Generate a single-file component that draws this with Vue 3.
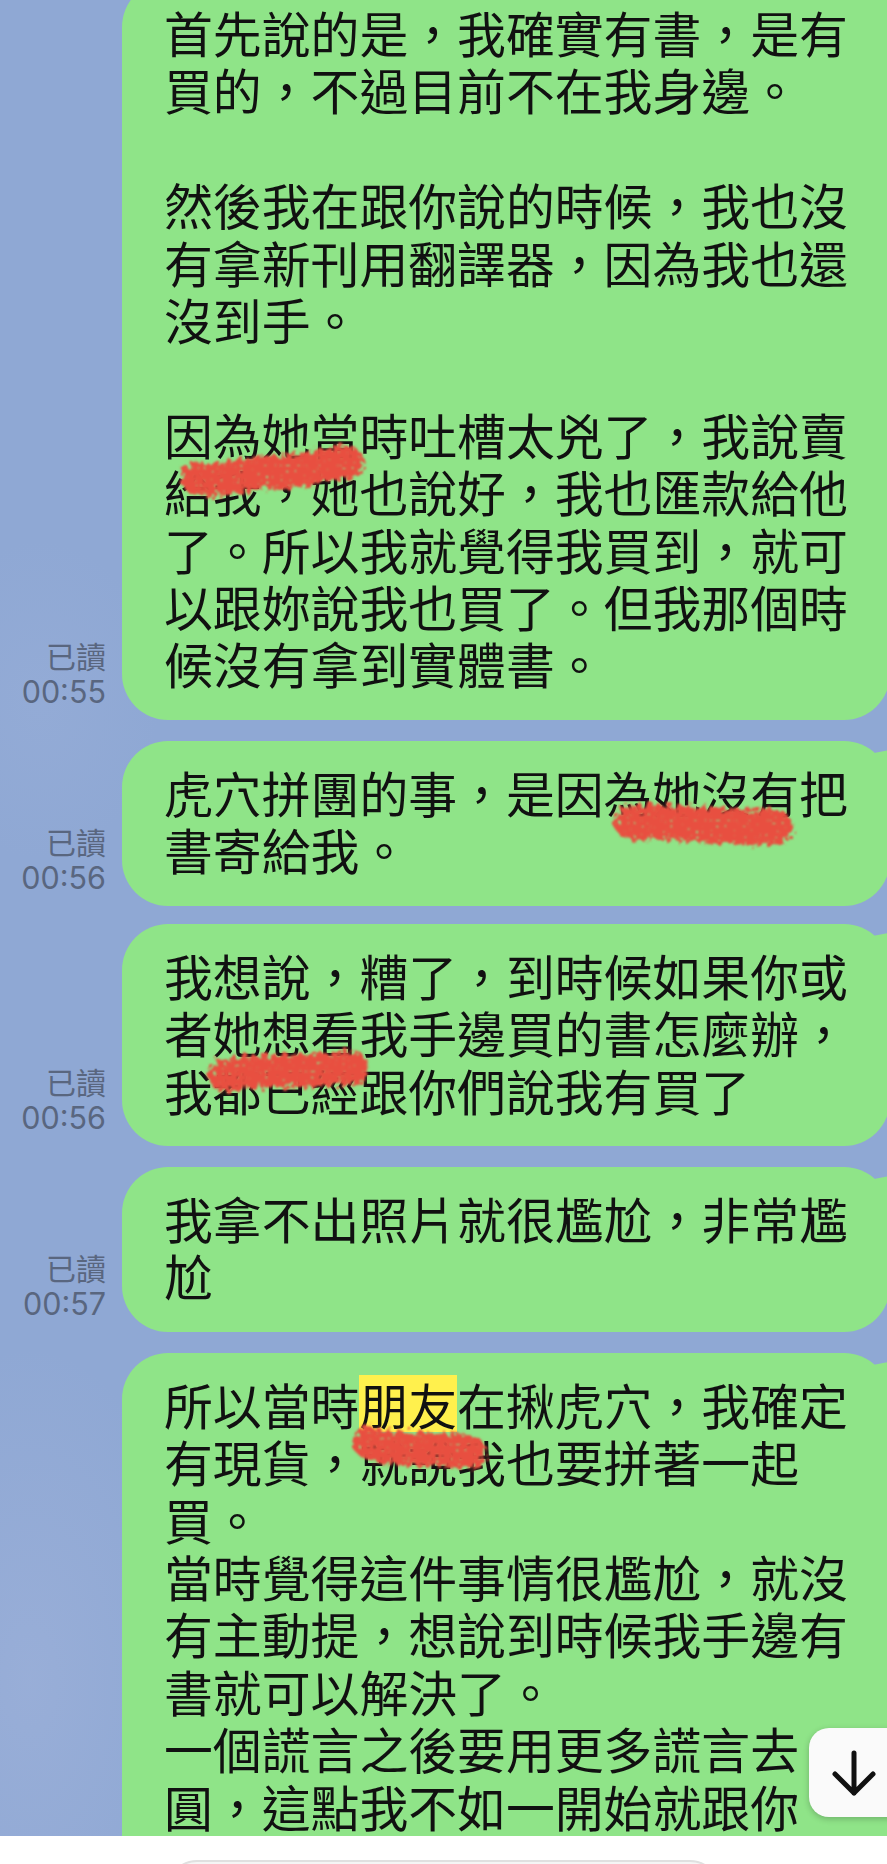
<template>
  <div class="screen">
    <svg class="filters" width="0" height="0" aria-hidden="true">
      <filter id="rough" filterUnits="userSpaceOnUse" x="0" y="0" width="260" height="100">
        <feTurbulence type="fractalNoise" baseFrequency="0.2" numOctaves="2" seed="4" result="noise" />
        <feDisplacementMap in="SourceGraphic" in2="noise" scale="16" result="shape" />
        <feTurbulence type="fractalNoise" baseFrequency="0.35" numOctaves="1" seed="9" />
        <feColorMatrix values="0 0 0 0 0  0 0 0 0 0  0 0 0 0 0  0 0 0 14 -9.5" result="holes" />
        <feComposite in="shape" in2="holes" operator="out" />
        <feGaussianBlur stdDeviation="0.8" />
      </filter>
    </svg>
    <main class="chat">
      <div
        v-for="msg in messages"
        :key="msg.id"
        class="row"
        :class="{ first: msg.id === 1, tight: msg.id === 3, cut: msg.id === 5 }"
      >
        <div class="meta">
          <template v-if="msg.time">
            <span class="read">已讀</span>
            <span class="time">{{ msg.time }}</span>
          </template>
        </div>
        <div class="bubble">
          <p class="text">
            <template v-for="(part, i) in msg.parts" :key="i">
              <span v-if="part.mark" class="mark">{{ part.mark }}</span>
              <template v-else>{{ part }}</template>
            </template>
          </p>
          <svg
            v-for="s in msg.scribbles"
            :key="s.d"
            class="scribble"
            :style="{ left: s.x + 'px', top: s.y + 'px' }"
            :width="s.w"
            :height="s.h"
          >
            <path :d="s.d" fill="none" stroke="#e8503f" :stroke-width="s.sw" stroke-linecap="round" filter="url(#rough)" />
          </svg>
        </div>
      </div>
      <button type="button" class="jump" aria-label="scroll down">
        <svg width="44" height="46" viewBox="0 0 44 46">
          <path d="M22 3V43M3 24L22 43L41 24" fill="none" stroke="#111" stroke-width="5" stroke-linecap="round" stroke-linejoin="round" />
        </svg>
      </button>
    </main>
    <footer class="footer">
      <div class="input"></div>
    </footer>
  </div>
</template>

<script setup>
const messages = [
  {
    id: 1,
    time: '00:55',
    parts: ['首先說的是\uFF0C我確實有書\uFF0C是有買的\uFF0C不過目前不在我身邊。\n\n然後我在跟你說的時候\uFF0C我也沒有拿新刊用翻譯器\uFF0C因為我也還沒到手。\n\n因為她當時吐槽太兇了\uFF0C我說賣給我\uFF0C她也說好\uFF0C我也匯款給他了。所以我就覺得我買到\uFF0C就可以跟妳說我也買了。但我那個時候沒有拿到實體書。'],
    scribbles: [{ x: 50, y: 455, w: 260, h: 100, sw: 33, d: 'M25 42C60 48 70 34 100 36S150 26 175 26' }],
  },
  {
    id: 2,
    time: '00:56',
    parts: ['虎穴拼團的事\uFF0C是因為她沒有把書寄給我。'],
    scribbles: [{ x: 480, y: 50, w: 260, h: 100, sw: 35, d: 'M30 32C70 28 110 38 173 36' }],
  },
  {
    id: 3,
    time: '00:56',
    parts: ['我想說\uFF0C糟了\uFF0C到時候如果你或者她想看我手邊買的書怎麼辦\uFF0C我都已經跟你們說我有買了'],
    scribbles: [{ x: 75, y: 118, w: 260, h: 100, sw: 33, d: 'M28 34C60 26 110 32 155 25' }],
  },
  {
    id: 4,
    time: '00:57',
    parts: ['我拿不出照片就很尷尬\uFF0C非常尷尬'],
    scribbles: [],
  },
  {
    id: 5,
    parts: [
      '所以當時',
      { mark: '朋友' },
      '在揪虎穴\uFF0C我確定有現貨\uFF0C就說我也要拼著一起買。\n當時覺得這件事情很尷尬\uFF0C就沒有主動提\uFF0C想說到時候我手邊有書就可以解決了。\n一個謊言之後要用更多謊言去圓\uFF0C這點我不如一開始就跟你',
    ],
    scribbles: [{ x: 220, y: 62, w: 260, h: 100, sw: 33, d: 'M28 28C50 38 90 32 128 37' }],
  },
];
</script>

<style>
html,
body {
  margin: 0;
  background: #fff;
}
</style>

<style scoped>
.screen {
  width: 887px;
  height: 1864px;
  overflow: hidden;
  display: flex;
  flex-direction: column;
  background: #fff;
  font-family: "Noto Sans CJK TC", "Noto Sans", sans-serif;
}

.filters {
  position: absolute;
}

.chat {
  position: relative;
  height: 1836px;
  flex: none;
  overflow: hidden;
  display: flex;
  flex-direction: column;
  gap: 21px;
  background:
    radial-gradient(ellipse at 30px 1680px, rgba(170, 185, 222, 0.35), transparent 170px),
    radial-gradient(ellipse at 40px 700px, rgba(160, 180, 220, 0.25), transparent 120px),
    #8fa8d4;
}

.row {
  display: flex;
  align-items: flex-end;
  flex: none;
}

.row.first {
  margin-top: -19px;
}

.row.tight {
  margin-top: -3px;
}

.meta {
  width: 106px;
  margin-right: 16px;
  padding-bottom: 10px;
  flex: none;
  display: flex;
  flex-direction: column;
  align-items: flex-end;
  color: #59667f;
}

.read {
  font-size: 30px;
  line-height: 36px;
}

.time {
  margin-top: 1px;
  font-family: Inter, "Liberation Sans", sans-serif;
  font-size: 30.5px;
  line-height: 36px;
}

.bubble {
  position: relative;
  width: 768px;
  flex: none;
  box-sizing: border-box;
  padding: 22px 40px 28px 42px;
  border-radius: 46px;
  background: #8fe488;
}

/* the last message runs past the bottom of the list */
.row.cut .bubble {
  padding-bottom: 120px;
}

/* small tail in the top right corner */
.bubble::after {
  content: "";
  position: absolute;
  right: 0;
  top: 9px;
  width: 16px;
  height: 34px;
  background: #8fe488;
  clip-path: polygon(0 3px, 100% 0, 100% 100%, 0 100%);
}

.text {
  margin: 0;
  font-size: 48.85px;
  line-height: 57.4px;
  color: #111;
  white-space: pre-wrap;
}

.mark {
  display: inline-block;
  line-height: 57.4px;
  background: #fff04d;
}

.scribble {
  position: absolute;
  overflow: visible;
}

.jump {
  position: absolute;
  left: 809px;
  top: 1728px;
  width: 100px;
  height: 89px;
  border: 0;
  border-radius: 20px;
  background: #fafafa;
  box-shadow: 0 2px 6px rgba(0, 0, 0, 0.22);
  display: flex;
  align-items: center;
  justify-content: flex-start;
  padding: 0 0 0 23px;
  box-sizing: border-box;
}

.footer {
  flex: 1;
  padding-top: 24px;
  display: flex;
  justify-content: center;
  background: #fff;
}

.input {
  width: 553px;
  height: 60px;
  box-sizing: border-box;
  border: 2px solid #e0e0e0;
  border-radius: 30px;
  background: #f5f5f5;
}
</style>
